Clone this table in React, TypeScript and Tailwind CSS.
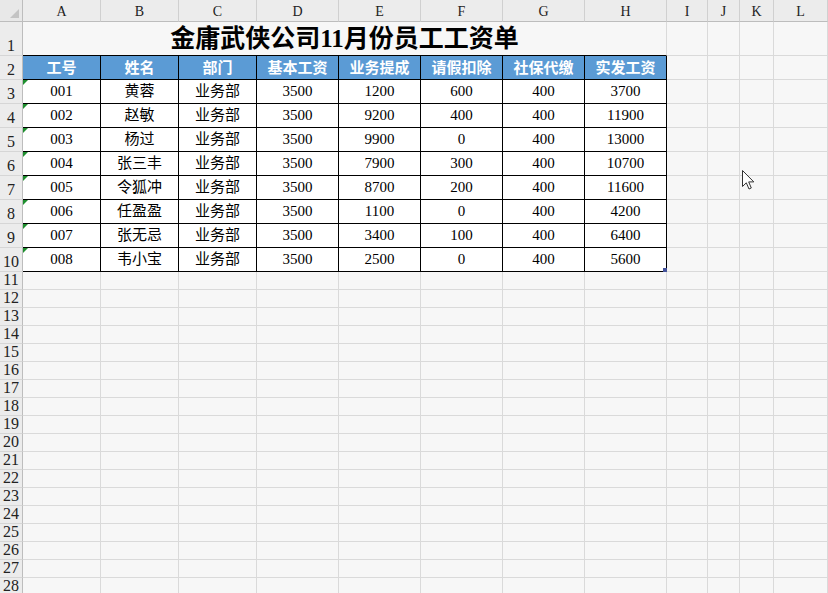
import React from "react";

const colW = [
  "w-[78px] shrink-0",
  "w-[78px] shrink-0",
  "w-[78px] shrink-0",
  "w-[82px] shrink-0",
  "w-[82px] shrink-0",
  "w-[82px] shrink-0",
  "w-[82px] shrink-0",
  "w-[82px] shrink-0",
  "w-[41px] shrink-0",
  "w-[32px] shrink-0",
  "w-[34px] shrink-0",
  "flex-1 min-w-0",
];
const letters = ["A", "B", "C", "D", "E", "F", "G", "H", "I", "J", "K", "L"];
const headers = ["工号", "姓名", "部门", "基本工资", "业务提成", "请假扣除", "社保代缴", "实发工资"];
const data: string[][] = [
  ["001", "黄蓉", "业务部", "3500", "1200", "600", "400", "3700"],
  ["002", "赵敏", "业务部", "3500", "9200", "400", "400", "11900"],
  ["003", "杨过", "业务部", "3500", "9900", "0", "400", "13000"],
  ["004", "张三丰", "业务部", "3500", "7900", "300", "400", "10700"],
  ["005", "令狐冲", "业务部", "3500", "8700", "200", "400", "11600"],
  ["006", "任盈盈", "业务部", "3500", "1100", "0", "400", "4200"],
  ["007", "张无忌", "业务部", "3500", "3400", "100", "400", "6400"],
  ["008", "韦小宝", "业务部", "3500", "2500", "0", "400", "5600"],
];

function RowHead({ n }: { n: number }) {
  return (
    <div className="w-[23px] shrink-0 bg-[#ececec] border-r border-r-[#bdbdbd] border-b border-b-[#d6d6d6] flex items-end justify-center text-[16px] leading-none pb-[1px] text-[#222] font-['Liberation_Serif',serif]">
      {n}
    </div>
  );
}

function EmptyCells({ from }: { from: number }) {
  return (
    <>
      {colW.slice(from).map((w, i) => (
        <div key={i} className={`${w} border-r border-b border-[#dadada] bg-[#f7f7f7]`} />
      ))}
    </>
  );
}

export default function App() {
  const emptyRows = Array.from({ length: 18 }, (_, i) => i + 11);
  return (
    <div className="relative w-[828px] h-[593px] overflow-hidden bg-[#f7f7f7] select-none">
      {/* column headers */}
      <div className="flex h-[22px]">
        <div className="relative w-[23px] shrink-0 bg-[#e8e8e8] border-r border-b border-[#bdbdbd]">
          <div className="absolute right-[3px] bottom-[3px] w-0 h-0 border-l-[9px] border-l-transparent border-b-[9px] border-b-[#c4c4c4]" />
        </div>
        {letters.map((l, i) => (
          <div
            key={l}
            className={`${colW[i]} bg-[#ececec] border-r border-r-[#d0d0d0] border-b border-b-[#bdbdbd] flex items-center justify-center pt-[1px] text-[14px] text-[#222] font-['Liberation_Serif',serif]`}
          >
            {l}
          </div>
        ))}
      </div>

      {/* row 1 - title */}
      <div className="flex h-[34px]">
        <RowHead n={1} />
        <div className="w-[644px] shrink-0 border-r border-r-[#dadada] border-b border-b-black bg-[#f7f7f7] flex items-center justify-center text-[25px] font-bold text-black font-['Liberation_Serif','Noto_Sans_CJK_SC',serif]">
          金庸武侠公司11月份员工工资单
        </div>
        <EmptyCells from={8} />
      </div>

      {/* row 2 - headers */}
      <div className="flex h-[24px]">
        <RowHead n={2} />
        {headers.map((h, i) => (
          <div
            key={h}
            className={`${colW[i]} bg-[#5b9bd5] border-r border-b border-black flex items-center justify-center text-[15px] font-bold text-white font-['Noto_Sans_CJK_SC',sans-serif]`}
          >
            {h}
          </div>
        ))}
        <EmptyCells from={8} />
      </div>

      {/* data rows */}
      {data.map((row, r) => (
        <div key={r} className="flex h-[24px]">
          <RowHead n={r + 3} />
          {row.map((v, i) => (
            <div
              key={i}
              className={`${colW[i]} relative bg-white border-r border-b border-black flex items-center justify-center text-[15px] text-black font-['Liberation_Serif','Noto_Sans_CJK_SC',serif]`}
            >
              {i === 0 && (
                <div className="absolute top-0 left-0 w-0 h-0 border-t-[5px] border-t-[#1f8f2f] border-r-[5px] border-r-transparent" />
              )}
              {i === 7 && r === 7 && (
                <div className="absolute right-[-1px] bottom-[-1px] w-[4px] h-[4px] bg-[#45549c]" />
              )}
              {v}
            </div>
          ))}
          <EmptyCells from={8} />
        </div>
      ))}

      {/* empty rows */}
      {emptyRows.map((n) => (
        <div key={n} className="flex h-[18px]">
          <RowHead n={n} />
          <EmptyCells from={0} />
        </div>
      ))}

      {/* mouse cursor */}
      <svg className="absolute left-[742px] top-[170px]" width="13" height="21" viewBox="0 0 13 21">
        <path
          d="M0.5 0.5 L0.5 16.5 L4.3 12.8 L7 19 L9.3 18 L6.7 11.9 L11.8 11.9 Z"
          fill="white"
          stroke="#333"
          strokeWidth="1"
          strokeLinejoin="round"
        />
      </svg>
    </div>
  );
}
